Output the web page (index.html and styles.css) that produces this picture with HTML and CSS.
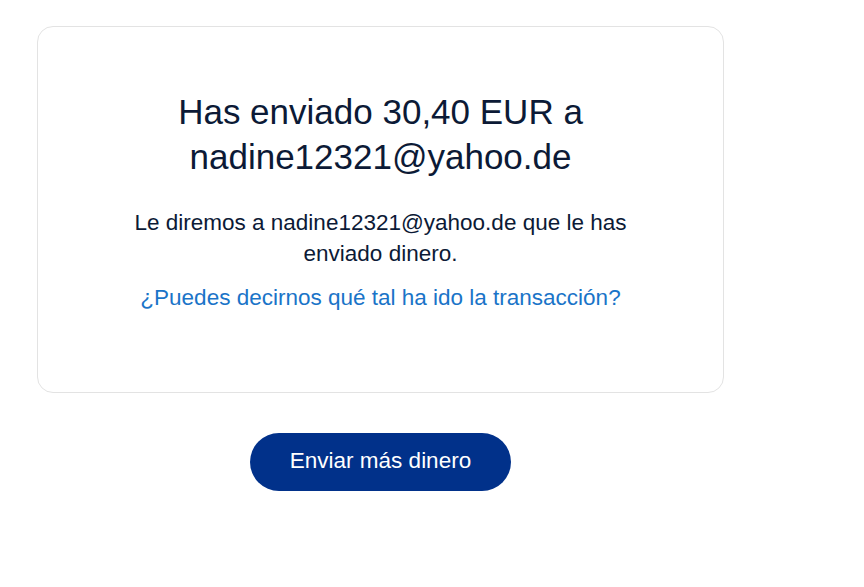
FILE: index.html
```html
<!DOCTYPE html>
<html lang="es">
<head>
<meta charset="utf-8">
<link rel="stylesheet" href="styles.css">
</head>
<body>
<main class="page">
  <section class="card">
    <h1 class="title">Has enviado 30,40 EUR a<br>nadine12321@yahoo.de</h1>
    <p class="note">Le diremos a nadine12321@yahoo.de que le has enviado dinero.</p>
    <a class="feedback" href="#">¿Puedes decirnos qué tal ha ido la transacción?</a>
  </section>
  <div class="actions">
    <button class="primary" type="button">Enviar más dinero</button>
  </div>
</main>
</body>
</html>
```
FILE: styles.css
```css
html, body {
  margin: 0;
  padding: 0;
  background: #ffffff;
}
body {
  font-family: "Liberation Sans", Arial, sans-serif;
  color: #0c1a36;
}
.page {
  width: 687px;
  padding: 26px 0 0 37px;
}
.card {
  box-sizing: border-box;
  height: 367px;
  border: 1px solid #e3e3e3;
  border-radius: 16px;
  padding: 62px 20px 0;
  display: flex;
  flex-direction: column;
  align-items: center;
  text-align: center;
}
.title {
  margin: 0;
  font-size: 35px;
  font-weight: 400;
  line-height: 45px;
}
.note {
  margin: 28px 0 0;
  max-width: 540px;
  font-size: 22.5px;
  line-height: 31px;
}
.feedback {
  margin-top: 13px;
  font-size: 22.5px;
  line-height: 31px;
  color: #1a74c8;
  text-decoration: none;
}
.actions {
  display: flex;
  justify-content: center;
  padding-top: 40px;
}
.primary {
  box-sizing: border-box;
  width: 261px;
  height: 58px;
  border: 0;
  border-radius: 29px;
  background: #01318a;
  color: #ffffff;
  font-family: "Liberation Sans", Arial, sans-serif;
  font-size: 22.5px;
  padding: 0 0 2px;
}
```
